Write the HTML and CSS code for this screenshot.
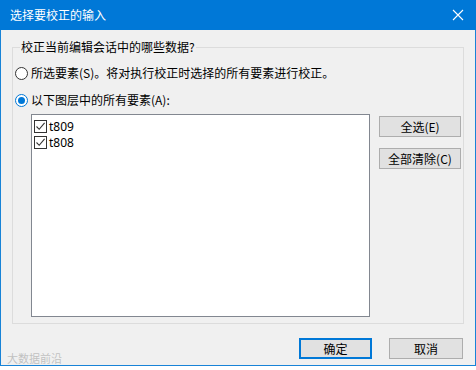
FILE: index.html
```html
<!DOCTYPE html>
<html lang="zh-CN">
<head>
<meta charset="utf-8">
<link rel="stylesheet" href="styles.css">
</head>
<body>
<div class="dialog">
  <div class="titlebar">
    <span class="title">选择要校正的输入</span>
    <svg class="close" width="12" height="12" viewBox="0 0 12 12"><path d="M1 1L11 11M11 1L1 11" stroke="#fff" stroke-width="1.1" fill="none"/></svg>
  </div>
  <div class="content">
    <fieldset class="group">
      <legend class="legend">校正当前编辑会话中的哪些数据?</legend>
      <label class="radio-row r1"><span class="radio"></span><span>所选要素(S)。将对执行校正时选择的所有要素进行校正。</span></label>
      <label class="radio-row r2"><span class="radio on"></span><span>以下图层中的所有要素(A):</span></label>
      <div class="list-area">
        <div class="listbox">
          <div class="item"><span class="check"><svg width="11" height="11" viewBox="0 0 11 11"><path d="M1.5 5.5L4.2 8.3L9.6 1.8" stroke="#333" stroke-width="1.1" fill="none"/></svg></span><span>t809</span></div>
          <div class="item"><span class="check"><svg width="11" height="11" viewBox="0 0 11 11"><path d="M1.5 5.5L4.2 8.3L9.6 1.8" stroke="#333" stroke-width="1.1" fill="none"/></svg></span><span>t808</span></div>
        </div>
        <div class="side-buttons">
          <div class="btn">全选(E)</div>
          <div class="btn">全部清除(C)</div>
        </div>
      </div>
    </fieldset>
    <div class="footer">
      <span class="wm-left">大数据前沿</span>
      <div class="btn ok">确定</div>
      <div class="btn cancel">取消</div>
    </div>
  </div>
</div>
</body>
</html>
```

FILE: styles.css
```css
html, body {
  margin: 0;
  padding: 0;
  background: #ffffff;
}
body {
  width: 476px;
  height: 370px;
  overflow: hidden;
  font-family: "Noto Sans CJK SC", "Noto Sans", sans-serif;
  font-size: 12px;
  color: #000;
}
.dialog {
  width: 476px;
  height: 366px;
  box-sizing: border-box;
  border: 1px solid #1883d7;
  border-top: none;
  background: #f0f0f0;
  display: flex;
  flex-direction: column;
}
.titlebar {
  height: 30px;
  margin: 0 -1px;
  background: #0078d7;
  display: flex;
  align-items: center;
  justify-content: space-between;
  padding: 0 12px 0 10px;
  flex-shrink: 0;
}
.title {
  color: #fff;
  font-size: 12px;
  line-height: 16px;
}
.close {
  display: block;
}
.content {
  flex: 1;
  display: flex;
  flex-direction: column;
  position: relative;
}
.group {
  margin: 9px 11px 0 11px;
  padding: 0 0 0 2px;
  border: 1px solid #dcdcdc;
  height: 285px;
  box-sizing: border-box;
  display: block;
}
.legend {
  padding: 0 1px;
  margin-left: 5px;
  line-height: 16px;
}
.radio-row {
  display: flex;
  align-items: center;
  gap: 3px;
  height: 16px;
  line-height: 16px;
}
.r1 { margin-top: 10px; }
.r2 { margin-top: 11px; }
.radio {
  width: 13px;
  height: 13px;
  box-sizing: border-box;
  border: 1px solid #333;
  border-radius: 50%;
  background: #fff;
  position: relative;
  flex-shrink: 0;
}
.radio.on {
  border-color: #0078d7;
}
.radio.on::after {
  content: "";
  position: absolute;
  left: 2px;
  top: 2px;
  width: 7px;
  height: 7px;
  border-radius: 50%;
  background: #0078d7;
}
.list-area {
  display: flex;
  align-items: flex-start;
  margin-top: 6px;
  padding-left: 16px;
}
.listbox {
  width: 339px;
  height: 203px;
  box-sizing: border-box;
  border: 1px solid #828790;
  background: #fff;
  padding: 3px 0 0 2px;
}
.item {
  display: flex;
  align-items: center;
  height: 16px;
  gap: 2px;
  font-family: "Noto Sans", sans-serif;
  font-size: 12px;
}
.check {
  width: 13px;
  height: 13px;
  box-sizing: border-box;
  border: 1px solid #333;
  background: #fff;
  display: flex;
  align-items: center;
  justify-content: center;
}
.check svg { display: block; }
.side-buttons {
  margin-left: 9px;
  margin-top: 2px;
  display: flex;
  flex-direction: column;
  gap: 11px;
}
.btn {
  width: 82px;
  height: 21px;
  box-sizing: border-box;
  border: 1px solid #adadad;
  background: #e1e1e1;
  display: flex;
  align-items: center;
  justify-content: center;
  line-height: 16px;
}
.footer {
  display: flex;
  align-items: center;
  justify-content: flex-end;
  padding: 14px 12px 0 0;
  gap: 17px;
  position: relative;
}
.ok {
  width: 73px;
  border: 2px solid #0078d7;
}
.cancel {
  width: 74px;
}
.wm-left {
  position: absolute;
  left: 6px;
  top: 28px;
  color: rgba(160,160,160,0.6);
  font-size: 11px;
  line-height: 12px;
}
```
